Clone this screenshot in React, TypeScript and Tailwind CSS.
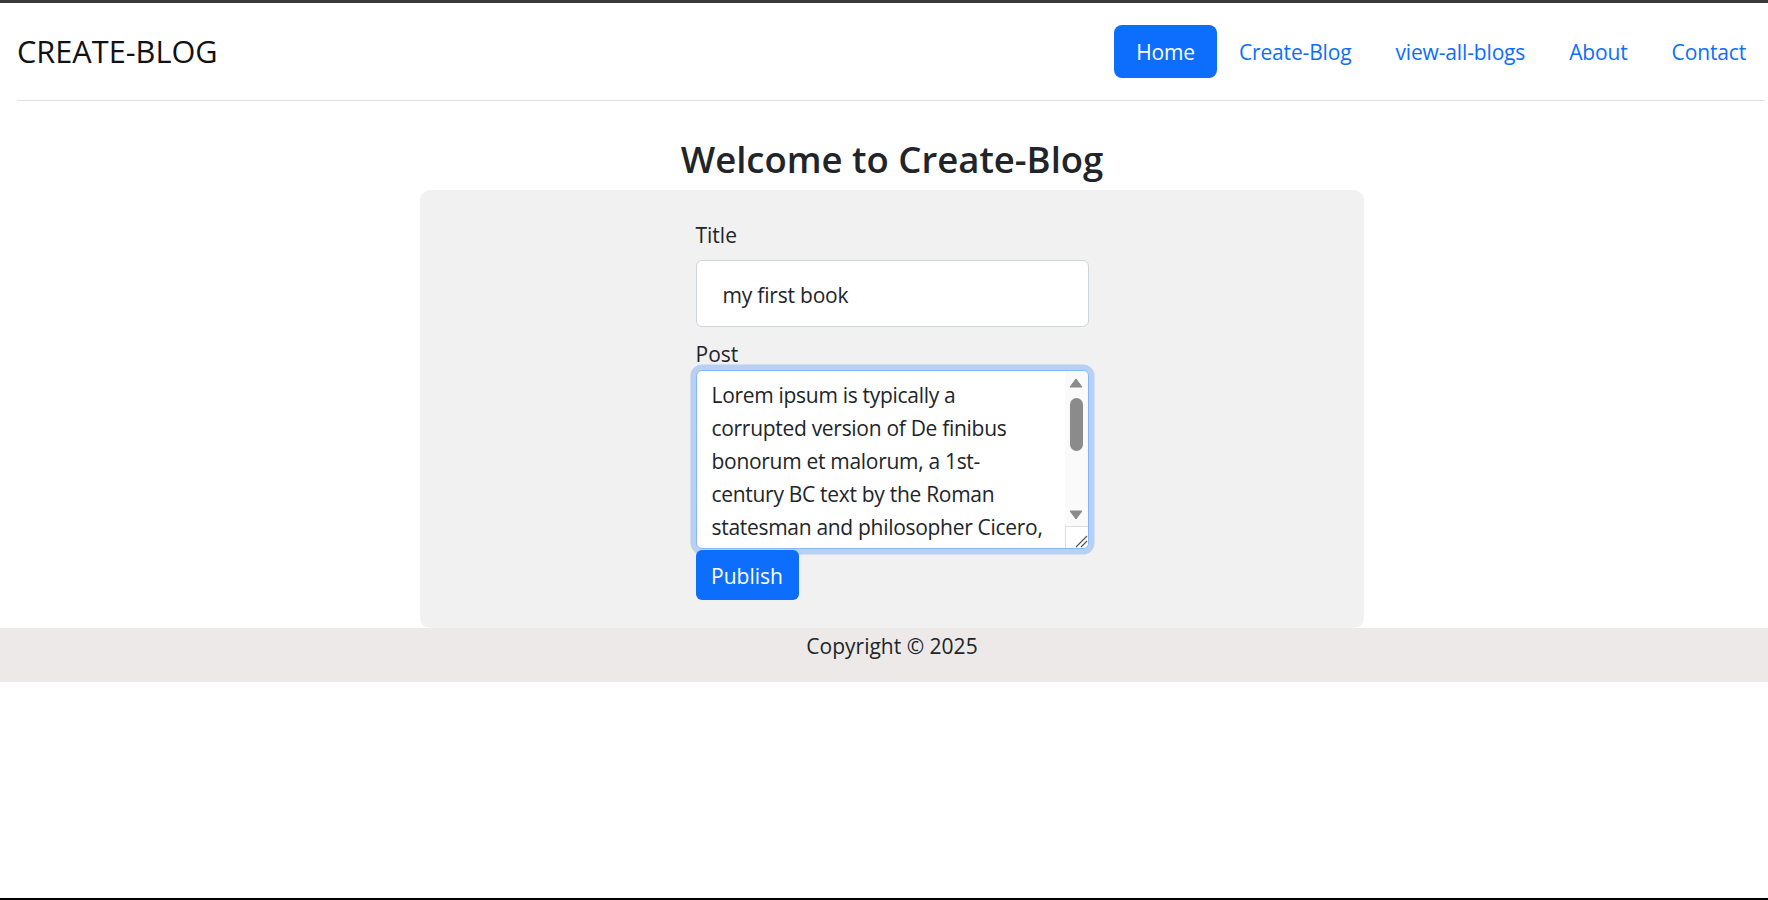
const links = ['Create-Blog', 'view-all-blogs', 'About', 'Contact'];

const post =
  'Lorem ipsum is typically a\ncorrupted version of De finibus\nbonorum et malorum, a 1st-\ncentury BC text by the Roman\nstatesman and philosopher Cicero,\nwith words altered, added, and\nremoved to make it nonsensical\nand improper Latin.';

function Scrollbar() {
  return (
    <div className="flex w-[23px] flex-col">
      <div className="flex h-[155px] flex-col items-center bg-[#fafafa]">
        <svg width="14" height="10" viewBox="0 0 14 10" className="mt-[7px]">
          <path d="M7 1 L13 9 L1 9 Z" fill="#8b8b8b" strokeLinejoin="round" stroke="#8b8b8b" strokeWidth="1" />
        </svg>
        <div className="mt-[10px] h-[53px] w-[13px] rounded-full bg-[#8b8b8b]" />
        <div className="flex-1" />
        <svg width="14" height="10" viewBox="0 0 14 10" className="mb-[6px]">
          <path d="M1 1 L13 1 L7 9 Z" fill="#8b8b8b" strokeLinejoin="round" stroke="#8b8b8b" strokeWidth="1" />
        </svg>
      </div>
      <div className="flex h-[22px] items-end justify-end border-t border-l border-[#dcdcdc] bg-white">
        <svg width="14" height="14" viewBox="0 0 14 14">
          <path d="M2 13 L13 2 M7 13 L13 7" stroke="#555" strokeWidth="1.2" />
        </svg>
      </div>
    </div>
  );
}

export default function App() {
  return (
    <div className="flex h-screen flex-col bg-white font-['Open_Sans',sans-serif] text-[#212529]">
      <div className="h-[3px] bg-[#3a3a3a]" />

      {/* navbar */}
      <header className="mr-[3px] ml-[17px] flex h-[98px] items-center justify-between border-b border-[#dee2e6]">
        <a className="text-[30.7px] leading-[45px] text-[#111]">CREATE-BLOG</a>
        <nav className="-mr-[3px] flex items-center">
          <a className="rounded-[8px] bg-[#0d6efd] px-[22px] pt-[11px] pb-[9px] text-[21px] leading-[33px] tracking-[-0.15px] text-white">
            Home
          </a>
          {links.map((l) => (
            <a key={l} className="px-[22px] pt-[11px] pb-[9px] text-[21px] leading-[33px] tracking-[-0.15px] text-[#0d6efd]">
              {l}
            </a>
          ))}
        </nav>
      </header>

      <main className="flex flex-col items-center pl-4">
        <h3 className="mt-[35px] mb-[8px] text-[36.5px] leading-[46px] font-semibold">Welcome to Create-Blog</h3>

        <div className="flex w-[944px] justify-center rounded-[10px] bg-[#f1f1f1] pt-[27px] pb-[28px]">
          <form className="flex w-[393px] flex-col">
            <label className="mb-[10px] pt-[4px] text-[21px] leading-[29px]">Title</label>
            <input
              className="h-[67px] rounded-[6px] border border-[#ced4da] bg-white px-[26px] pt-[2px] text-[21px] leading-[33px] tracking-[-0.2px] outline-none"
              defaultValue="my first book"
            />
            <label className="mt-[9px] mb-[1px] pt-[4px] text-[21px] leading-[29px]">Post</label>
            <div className="flex h-[179px] overflow-hidden rounded-[6px] border border-[#86b7fe] bg-white shadow-[0_0_0_5.5px_rgba(13,110,253,0.25)]">
              <textarea
                className="flex-1 resize-none overflow-hidden pt-[8px] pb-[5px] pl-[15px] text-[21px] leading-[33px] tracking-[-0.3px] whitespace-pre outline-none"
                defaultValue={post}
              />
              <Scrollbar />
            </div>
            <button
              type="button"
              className="mt-[1px] h-[50px] w-[103px] rounded-[6px] bg-[#0d6efd] pt-[2px] text-[21px] leading-[33px] text-white"
            >
              Publish
            </button>
          </form>
        </div>
      </main>

      <footer className="h-[54px] bg-[#ece9e8] pt-[2px] pl-4 text-center text-[21px] leading-[33px]">Copyright © 2025</footer>

      <div className="flex-1" />
      <div className="h-[2px] bg-black" />
    </div>
  );
}
